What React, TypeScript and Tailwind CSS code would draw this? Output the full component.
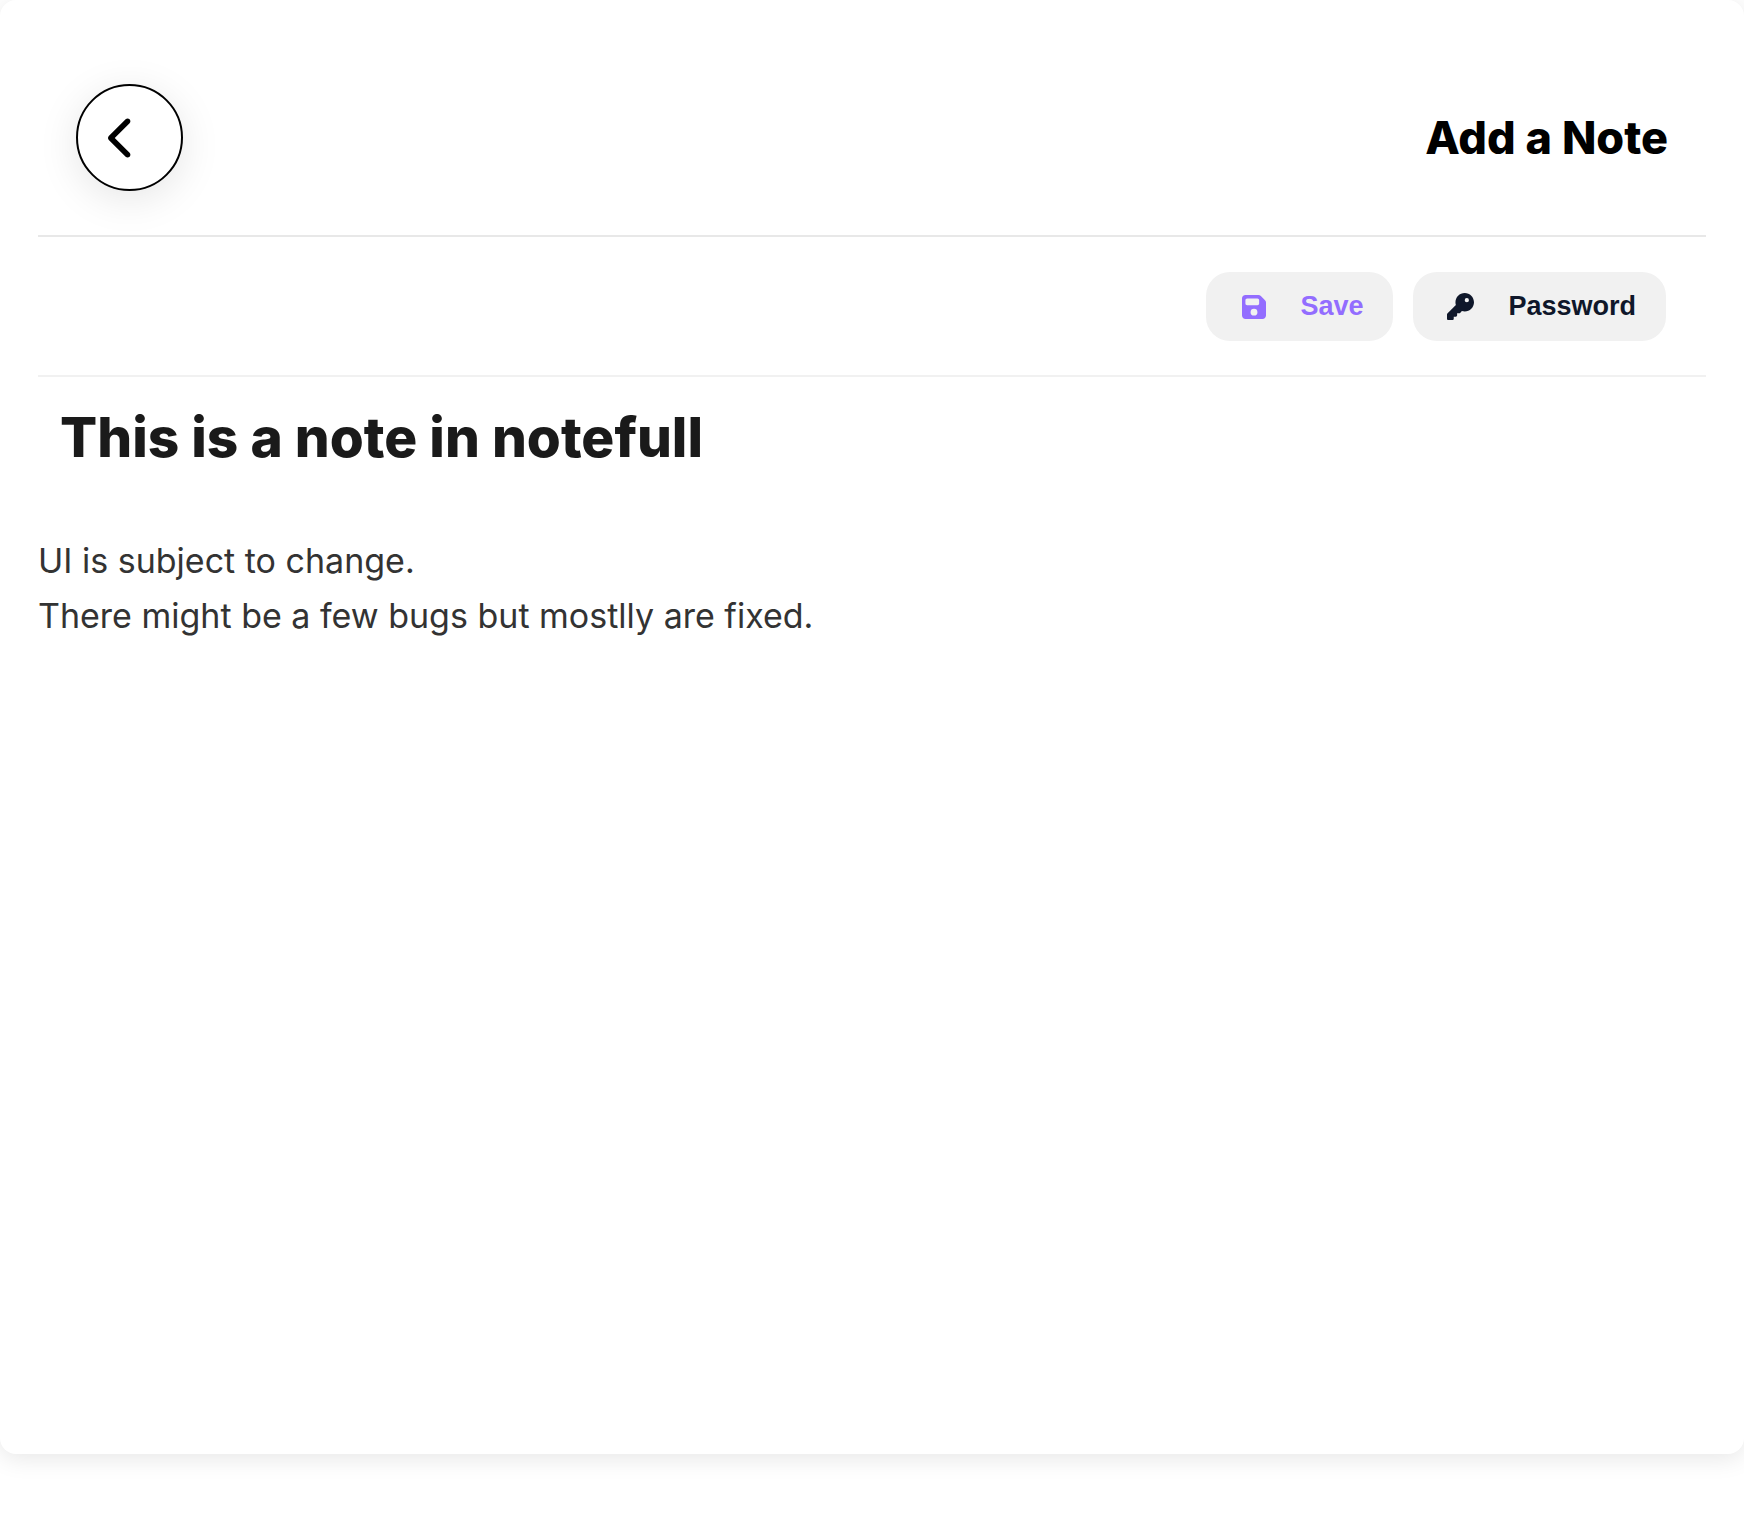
import { useState } from "react";
import { FaChevronLeft, FaFloppyDisk, FaKey } from "react-icons/fa6";

const App = () => {
  const [title, setTitle] = useState("This is a note in notefull");
  const [content, setContent] = useState(
    "UI is subject to change.\nThere might be a few bugs but mostlly are fixed."
  );

  return (
    <div className="min-h-screen overflow-hidden bg-white pb-[66px] font-['Inter',sans-serif]">
      <main className="flex min-h-[1454px] flex-col rounded-2xl bg-white px-[38px] pt-[38px] shadow-[0_4px_24px_rgba(0,0,0,0.1)]">
        <header className="flex items-center justify-between border-b-2 border-[#e8e8e8] px-[38px] pt-[46px] pb-11">
          <button
            type="button"
            aria-label="Back"
            className="flex size-[107px] items-center justify-center rounded-full border-2 border-black bg-white pr-4 text-black shadow-[0_8px_40px_rgba(0,0,0,0.1)]"
          >
            <FaChevronLeft className="h-[46px] w-7" />
          </button>
          <h1 className="text-[45px] leading-[64px] font-extrabold text-black">
            Add a Note
          </h1>
        </header>

        <div className="flex justify-end gap-5 border-b-2 border-[#f1f1f1] px-10 pt-[35px] pb-[34px]">
          <button
            type="button"
            className="flex h-[69px] items-center gap-[34px] rounded-3xl bg-[#f1f1f1] pr-[30px] pl-9 font-['Liberation_Sans',sans-serif] text-[27px] font-bold text-[#936dff]"
          >
            <FaFloppyDisk className="h-7 w-6" />
            Save
          </button>
          <button
            type="button"
            className="flex h-[69px] items-center gap-[34px] rounded-3xl bg-[#f1f1f1] pr-[30px] pl-[34px] font-['Liberation_Sans',sans-serif] text-[27px] font-bold text-[#0f172a]"
          >
            <FaKey className="size-[27px]" />
            Password
          </button>
        </div>

        <input
          type="text"
          aria-label="Note title"
          value={title}
          onChange={(e) => setTitle(e.target.value)}
          className="mt-5 h-20 w-full px-[22px] text-[55px] font-extrabold text-[#1a1a1a] focus:outline-none"
        />
        <textarea
          aria-label="Note content"
          value={content}
          onChange={(e) => setContent(e.target.value)}
          className="mt-14 w-full flex-1 resize-none text-[34px] leading-[55px] text-[#333] focus:outline-none"
        />
      </main>
    </div>
  );
};

export default App;
